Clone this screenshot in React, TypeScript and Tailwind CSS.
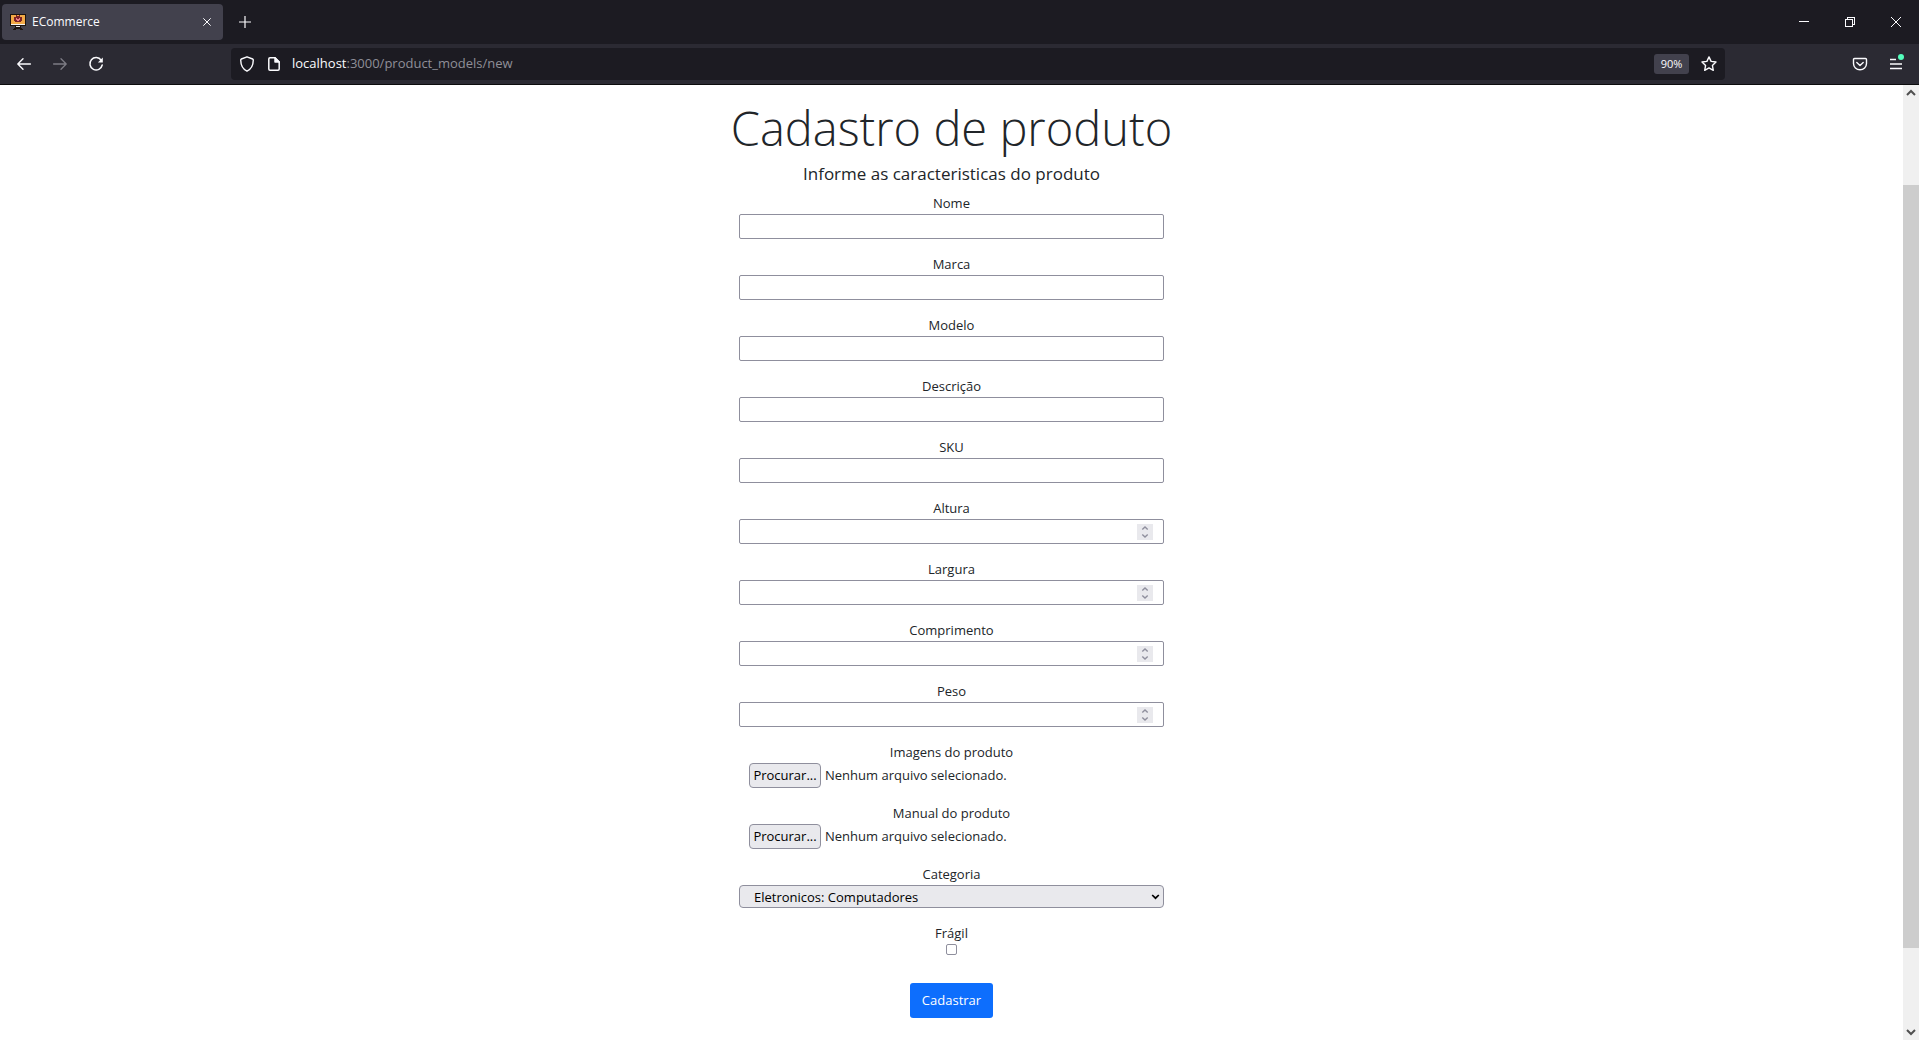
import { useRef, useState } from "react";

const textFields = [
  { id: "nome", label: "Nome" },
  { id: "marca", label: "Marca" },
  { id: "modelo", label: "Modelo" },
  { id: "descricao", label: "Descrição" },
  { id: "sku", label: "SKU" },
];

const numberFields = [
  { id: "altura", label: "Altura" },
  { id: "largura", label: "Largura" },
  { id: "comprimento", label: "Comprimento" },
  { id: "peso", label: "Peso" },
];

const fileFields = [
  { id: "imagens", label: "Imagens do produto" },
  { id: "manual", label: "Manual do produto" },
];

const labelClass = "block text-center text-[13px] leading-[22px]";
const boxClass =
  "block h-[25px] w-full appearance-none rounded-[2px] border border-[#8f8f9d] bg-white px-2 text-[13px] text-black outline-none focus:border-[#0060df]";

function TextField({ id, label }: { id: string; label: string }) {
  return (
    <div>
      <label htmlFor={id} className={labelClass}>{label}</label>
      <input id={id} type="text" className={boxClass} />
    </div>
  );
}

function NumberField({ id, label }: { id: string; label: string }) {
  const ref = useRef<HTMLInputElement>(null);
  return (
    <div>
      <label htmlFor={id} className={labelClass}>{label}</label>
      <div className="relative">
        <input
          ref={ref}
          id={id}
          type="number"
          className={`${boxClass} [appearance:textfield] [&::-webkit-inner-spin-button]:appearance-none`}
        />
        <div className="absolute inset-y-0 right-[11px] flex items-center">
          <div className="flex h-4 w-4 flex-col bg-[#e9e9ed] text-[#8f8f9d]">
            <button type="button" aria-label={`Aumentar ${label}`} className="flex flex-1 items-center justify-center" onClick={() => ref.current?.stepUp()}>
              <svg width="8" height="6" viewBox="0 0 8 6" fill="none" stroke="currentColor" strokeWidth="1.4"><path d="M1.3 4.600 4 2l2.700 2.600" /></svg>
            </button>
            <button type="button" aria-label={`Diminuir ${label}`} className="flex flex-1 items-center justify-center" onClick={() => ref.current?.stepDown()}>
              <svg width="8" height="6" viewBox="0 0 8 6" fill="none" stroke="currentColor" strokeWidth="1.4"><path d="M1.3 1.400 4 4l2.700-2.600" /></svg>
            </button>
          </div>
        </div>
      </div>
    </div>
  );
}

function FileField({ id, label }: { id: string; label: string }) {
  const ref = useRef<HTMLInputElement>(null);
  const [name, setName] = useState("Nenhum arquivo selecionado.");
  return (
    <div className="relative">
      <label htmlFor={id} className={labelClass}>{label}</label>
      <input
        ref={ref}
        id={id}
        type="file"
        className="sr-only"
        onChange={(e) => setName(e.target.files?.[0]?.name ?? "Nenhum arquivo selecionado.")}
      />
      <div className="flex h-[25px] items-center gap-1 pl-2.5 text-[13px]">
        <button
          type="button"
          className="h-[25px] w-[72px] shrink-0 rounded-[4px] border border-[#8f8f9d] bg-[#e9e9ed] whitespace-nowrap text-black"
          onClick={() => ref.current?.click()}
        >
          Procurar...
        </button>
        <span>{name}</span>
      </div>
    </div>
  );
}

function Favicon() {
  return (
    <svg width="16" height="16" viewBox="0 0 16 16" shapeRendering="crispEdges" aria-hidden="true">
      <rect x="0" y="0" width="16" height="12" fill="#1c1410" />
      <rect x="1" y="1" width="14" height="9" fill="#f2a946" />
      <rect x="1" y="10" width="14" height="1" fill="#f4f4f4" />
      <path d="M4 3h2V1h1v1h2V1h1v2h2v4h-1v1H5V7H4z" fill="#7c2327" />
      <path d="M6 4h1v1h2V4h1v2H9v1H7V6H6z" fill="#ee7d86" />
      <path d="M6 12h4v2H6z" fill="#e6e6e6" />
      <path d="M5 12h1v1h4v-1h1v2h1v1h1v1h-3v-1H6v1H3v-1h1v-1h1z" fill="#1c1410" />
    </svg>
  );
}

function BrowserChrome() {
  return (
    <header className="border-b border-[#0c0c0d] bg-[#2b2a33] text-[#fbfbfe]">
      <div className="flex h-11 items-center bg-[#1c1b22] pl-0.5">
        <div className="flex h-9 w-[221px] items-center rounded-[4px] bg-[#42414d] pr-1.5 pl-2">
          <Favicon />
          <span className="ml-1.5 flex-1 text-[12px]">ECommerce</span>
          <button type="button" aria-label="Fechar aba" className="flex h-5 w-5 items-center justify-center">
            <svg width="8" height="8" viewBox="0 0 8 8" stroke="currentColor" strokeWidth="1"><path d="M.3.3l7.400 7.400M7.700.3.3 7.700" /></svg>
          </button>
        </div>
        <button type="button" aria-label="Nova aba" className="ml-2 flex h-7 w-7 items-center justify-center">
          <svg width="12" height="12" viewBox="0 0 12 12" stroke="currentColor" strokeWidth="1.2"><path d="M6 0v12M0 6h12" /></svg>
        </button>
        <div className="ml-auto flex">
          <button type="button" aria-label="Minimizar" className="flex h-11 w-[46px] items-center justify-center">
            <svg width="10" height="10" viewBox="0 0 10 10" stroke="currentColor" shapeRendering="crispEdges"><path d="M0 4.500h10" /></svg>
          </button>
          <button type="button" aria-label="Restaurar" className="flex h-11 w-[46px] items-center justify-center">
            <svg width="10" height="10" viewBox="0 0 10 10" fill="none" stroke="currentColor" shapeRendering="crispEdges"><path d="M.5 2.500h7v7h-7zM2.500 2V.5h7v7H8" /></svg>
          </button>
          <button type="button" aria-label="Fechar" className="flex h-11 w-[46px] items-center justify-center">
            <svg width="10" height="10" viewBox="0 0 10 10" stroke="currentColor" strokeWidth="1"><path d="M0 0l10 10M10 0 0 10" /></svg>
          </button>
        </div>
      </div>

      <div className="flex h-10 items-center pl-2">
        <nav aria-label="Navegação" className="flex gap-1">
          <button type="button" aria-label="Voltar" className="flex h-8 w-8 items-center justify-center">
            <svg width="16" height="16" viewBox="0 0 16 16" fill="none" stroke="currentColor" strokeWidth="1.4" strokeLinecap="round" strokeLinejoin="round"><path d="M14.400 8H2M7 2.800 1.800 8 7 13.200" /></svg>
          </button>
          <button type="button" aria-label="Avançar" disabled className="flex h-8 w-8 items-center justify-center text-[#7d7c85]">
            <svg width="16" height="16" viewBox="0 0 16 16" fill="none" stroke="currentColor" strokeWidth="1.3" strokeLinecap="round" strokeLinejoin="round"><path d="M1.600 8H14M9 2.800 14.200 8 9 13.200" /></svg>
          </button>
          <button type="button" aria-label="Recarregar" className="flex h-8 w-8 items-center justify-center">
            <svg width="16" height="16" viewBox="0 0 16 16" fill="none" stroke="currentColor" strokeWidth="1.5" strokeLinecap="round"><path d="M13.200 4.200A6.200 6.200 0 1 0 14.200 9" /><path d="M14.800 1.600v4.900H9.900z" fill="currentColor" stroke="none" /></svg>
          </button>
        </nav>
        <div className="ml-[119px] flex h-8 flex-1 items-center rounded-[4px] bg-[#1c1b22] pr-2 pl-2">
          <svg width="16" height="16" viewBox="0 0 16 16" fill="none" stroke="currentColor" strokeWidth="1.4" strokeLinejoin="round" aria-hidden="true"><path d="M8 .8 13.600 3c.5.200.7.600.7 1.100C14.200 9.500 12.400 13.200 8 15.200 3.600 13.200 1.800 9.500 1.700 4.100c0-.5.200-.9.7-1.100z" /></svg>
          <svg className="ml-3" width="14" height="16" viewBox="0 0 14 16" fill="none" stroke="currentColor" strokeWidth="1.5" strokeLinejoin="round" aria-hidden="true"><path d="M1.800 3c0-.7.500-1.200 1.200-1.200h5L12.200 6v7c0 .7-.5 1.200-1.200 1.200H3c-.7 0-1.200-.5-1.200-1.200z" /><path d="M8 1.800V6h4.200z" fill="currentColor" /></svg>
          <div className="ml-[11px] flex-1 text-[13px] text-[#8f8f98]">
            <span className="text-[#fbfbfe]">localhost</span>:3000/product_models/new
          </div>
          <button type="button" className="h-5 w-[35px] rounded-[3px] bg-[#42414d] text-[11px] leading-5">90%</button>
          <button type="button" aria-label="Favoritar" className="ml-3 flex h-4 w-4 items-center justify-center">
            <svg width="16" height="16" viewBox="0 0 16 16" fill="none" stroke="currentColor" strokeWidth="1.4" strokeLinejoin="round"><path d="M8 .9l2.100 4.500 4.900.6-3.600 3.400.9 4.900L8 11.900l-4.300 2.400.9-4.900L1 6l4.900-.6z" /></svg>
          </button>
        </div>
        <div className="ml-[127px] flex gap-5 pr-[15px]">
          <button type="button" aria-label="Pocket" className="flex h-4 w-4 items-center justify-center">
            <svg width="16" height="16" viewBox="0 0 16 16" fill="none" stroke="currentColor" strokeWidth="1.4" strokeLinecap="round" strokeLinejoin="round"><path d="M2.500 2.500h11c.6 0 1 .4 1 1V7.500a6.500 6.300 0 0 1-13 0v-4c0-.6.400-1 1-1z" /><path d="M4.800 6.400 8 9.400l3.200-3" /></svg>
          </button>
          <button type="button" aria-label="Menu" className="relative flex h-4 w-4 items-center justify-center">
            <svg className="overflow-visible" width="16" height="16" viewBox="0 0 16 16" stroke="currentColor" strokeWidth="1.3"><path d="M2 3.500h6M2 8h12M2 12.500h12" /><circle cx="13" cy="1" r="3" fill="#54ffbd" stroke="none" /></svg>
          </button>
        </div>
      </div>
    </header>
  );
}

function Scrollbar() {
  return (
    <div aria-hidden="true" className="flex w-4 shrink-0 flex-col items-center bg-[#f0f0f0] text-[#505050]">
      <svg className="my-1" width="10" height="8" viewBox="0 0 10 8" fill="none" stroke="currentColor" strokeWidth="2"><path d="M1 6l4-4 4 4" /></svg>
      <div className="flex-[84]" />
      <div className="w-full flex-[763] bg-[#cdcdcd]" />
      <div className="flex-[76]" />
      <svg className="my-1" width="10" height="8" viewBox="0 0 10 8" fill="none" stroke="currentColor" strokeWidth="2"><path d="M1 2l4 4 4-4" /></svg>
    </div>
  );
}

export default function App() {
  return (
    <div className="flex min-h-screen flex-col bg-white font-['Open_Sans','Noto_Sans',sans-serif] text-[#212529]">
      <BrowserChrome />
      <div className="flex flex-1">
        <main className="flex flex-1 flex-col items-center pt-3 pb-[22px]">
          <h1 className="text-[47px] leading-[62px] font-light">Cadastro de produto</h1>
          <p className="mb-[3px] text-[17px] leading-[30px]">Informe as caracteristicas do produto</p>
          <form className="flex w-[425px] max-w-full flex-col gap-3.5" onSubmit={(e) => e.preventDefault()}>
            {textFields.map((f) => <TextField key={f.id} {...f} />)}
            {numberFields.map((f) => <NumberField key={f.id} {...f} />)}
            {fileFields.map((f) => <FileField key={f.id} {...f} />)}
            <div>
              <label htmlFor="categoria" className={labelClass}>Categoria</label>
              <div className="relative">
                <select id="categoria" className="block h-[23px] w-full appearance-none rounded-[4px] border border-[#8f8f9d] bg-[#e9e9ed] pl-3.5 text-[13px] leading-5 text-black">
                  <option>Eletronicos: Computadores</option>
                </select>
                <svg className="pointer-events-none absolute top-2 right-1" width="9" height="8" viewBox="0 0 9 8" fill="none" stroke="#000" strokeWidth="1.700" aria-hidden="true"><path d="M1.200 2 4.500 5.200 7.800 2" /></svg>
              </div>
            </div>
            <div className="flex flex-col items-center">
              <label htmlFor="fragil" className={labelClass}>Frágil</label>
              <input id="fragil" type="checkbox" className="h-[11px] w-[11px] appearance-none rounded-[2px] border border-[#8f8f9d] bg-white checked:bg-[#0060df]" />
            </div>
            <button type="submit" className="mt-3.5 h-[35px] w-[83px] self-center rounded-[3px] bg-[#0d6efd] text-[13px] text-white">Cadastrar</button>
          </form>
        </main>
        <Scrollbar />
      </div>
    </div>
  );
}
